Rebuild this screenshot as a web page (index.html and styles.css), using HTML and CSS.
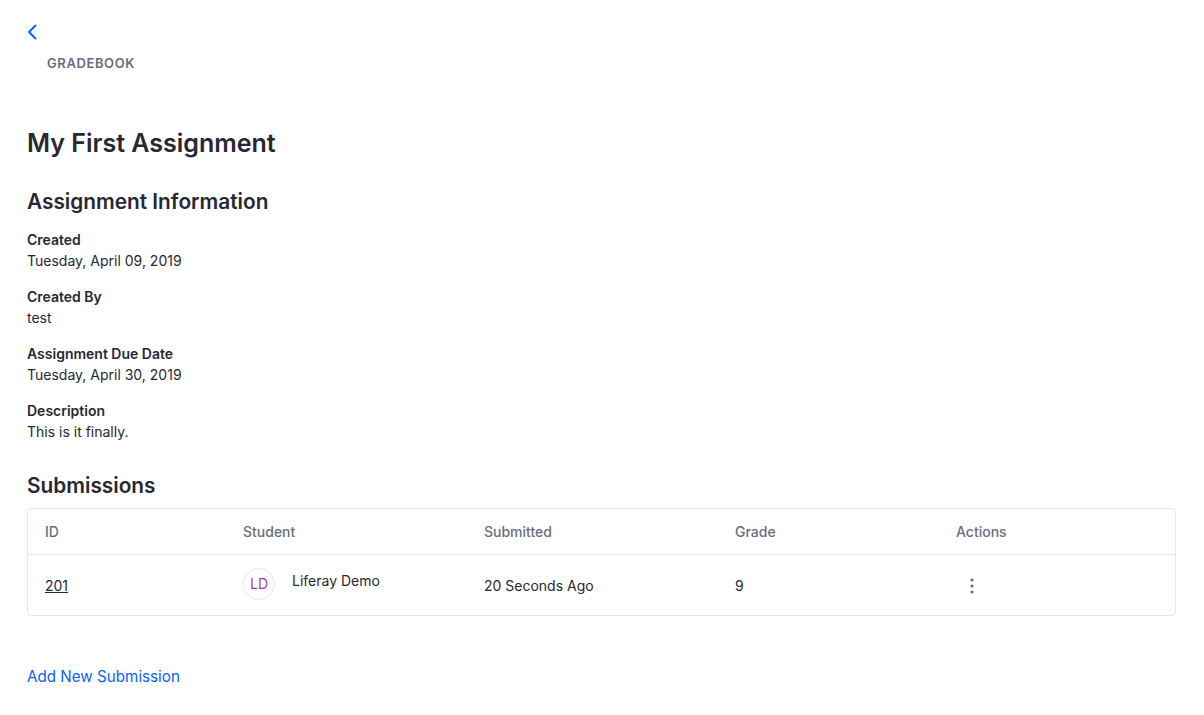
FILE: index.html
```html
<!DOCTYPE html>
<html lang="en">
<head>
<meta charset="utf-8">
<title>My First Assignment</title>
<link rel="stylesheet" href="styles.css">
</head>
<body>
<div class="page">
  <header class="topbar">
    <a class="back" href="#" aria-label="Back">
      <svg width="12" height="16" viewBox="0 0 12 16" aria-hidden="true"><path d="M8.5 1.5 L2 8 L8.5 14.5" fill="none" stroke="#0b5fff" stroke-width="2" stroke-linecap="round" stroke-linejoin="round"/></svg>
    </a>
    <div class="crumb">GRADEBOOK</div>
  </header>

  <h1 class="title">My First Assignment</h1>

  <h2 class="section">Assignment Information</h2>
  <dl class="info">
    <div class="info-item"><dt>Created</dt><dd>Tuesday, April 09, 2019</dd></div>
    <div class="info-item"><dt>Created By</dt><dd>test</dd></div>
    <div class="info-item"><dt>Assignment Due Date</dt><dd>Tuesday, April 30, 2019</dd></div>
    <div class="info-item"><dt>Description</dt><dd>This is it finally.</dd></div>
  </dl>

  <h2 class="section submissions-title">Submissions</h2>
  <div class="table">
    <div class="row head">
      <div class="cell">ID</div>
      <div class="cell">Student</div>
      <div class="cell">Submitted</div>
      <div class="cell">Grade</div>
      <div class="cell">Actions</div>
    </div>
    <div class="row body">
      <div class="cell"><a class="id-link" href="#">201</a></div>
      <div class="cell student">
        <span class="avatar">LD</span>
        <span class="name">Liferay Demo</span>
      </div>
      <div class="cell">20 Seconds Ago</div>
      <div class="cell">9</div>
      <div class="cell">
        <button class="kebab" aria-label="Actions">
          <svg width="4" height="16" viewBox="0 0 4 16" aria-hidden="true"><circle cx="2" cy="2" r="1.6" fill="#6b6c7e"/><circle cx="2" cy="8" r="1.6" fill="#6b6c7e"/><circle cx="2" cy="14" r="1.6" fill="#6b6c7e"/></svg>
        </button>
      </div>
    </div>
  </div>

  <a class="add-link" href="#">Add New Submission</a>
</div>
</body>
</html>
```

FILE: styles.css
```css
* { box-sizing: border-box; }
html, body { margin: 0; padding: 0; background: #fff; }
body {
  font-family: Inter, "Noto Sans", "Liberation Sans", sans-serif;
  color: #272833;
  font-size: 14px;
}
.page {
  padding: 24px 28px 0 27px;
}
.topbar { display: flex; flex-direction: column; }
.back { display: block; width: 12px; height: 16px; line-height: 0; }
.crumb {
  margin-top: 15px;
  margin-left: 20px;
  font-size: 13px;
  line-height: 16px;
  font-weight: 600;
  color: #6b6c7e;
  letter-spacing: 0.6px;
}
.title {
  margin: 58px 0 0;
  font-size: 25px;
  line-height: 29px;
  font-weight: 600;
}
.section {
  margin: 32px 0 0;
  font-size: 20.8px;
  line-height: 24px;
  font-weight: 600;
}
.info { margin: 16px 0 0; }
.info-item + .info-item { margin-top: 16px; }
.info dt {
  font-weight: 600;
  line-height: 20px;
}
.info dd {
  margin: 1px 0 0;
  line-height: 20px;
}
.submissions-title { margin-top: 32px; }
.table {
  margin-top: 10px;
  border: 1px solid #e7e7ed;
  border-radius: 4px;
}
.row {
  display: grid;
  grid-template-columns: 198px 241px 251px 221px 1fr;
  align-items: center;
}
.row.head {
  height: 46px;
  padding-top: 1px;
  border-bottom: 1px solid #e7e7ed;
  color: #6b6c7e;
  font-weight: 500;
}
.row.body { height: 60px; padding-top: 2px; }
.cell { padding-left: 17px; line-height: 20px; }
.id-link { color: #272833; text-decoration: underline; }
.student { display: flex; align-items: center; gap: 17px; }
.avatar {
  width: 32px;
  height: 32px;
  border-radius: 50%;
  border: 1px solid #e7e7ed;
  display: flex;
  align-items: center;
  justify-content: center;
  color: #a13ad0;
  font-size: 14px;
  margin-top: -4px;
}
.name { margin-top: -10px; }
.kebab {
  border: 0;
  background: transparent;
  padding: 0;
  margin-left: 14px;
  width: 4px;
  height: 16px;
  line-height: 0;
  display: block;
  cursor: pointer;
}
.add-link {
  display: inline-block;
  margin-top: 49px;
  font-size: 15.2px;
  line-height: 24px;
  color: #0b5fff;
  text-decoration: none;
}
```
